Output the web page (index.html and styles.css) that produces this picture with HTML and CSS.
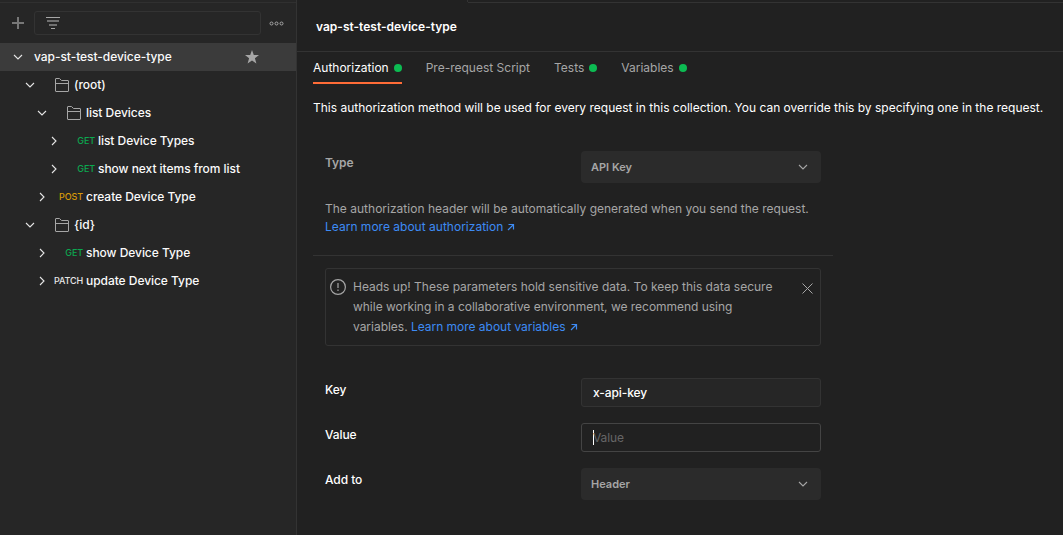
FILE: index.html
```html
<!DOCTYPE html>
<html lang="en">
<head>
<meta charset="utf-8">
<title>vap-st-test-device-type</title>
<link rel="stylesheet" href="styles.css">
</head>
<body>
<svg class="defs" width="0" height="0">
  <symbol id="down" viewBox="0 0 12 12"><path d="M2 4l4 4 4-4"/></symbol>
  <symbol id="right" viewBox="0 0 12 12"><path d="M4 2l4 4-4 4"/></symbol>
  <symbol id="folder" viewBox="0 0 14 14"><path d="M.5 13V1q0-.5.5-.5h3.500L6.500 2.500H13q.5 0 .5.5V13q0 .5-.5.5H1q-.5 0-.5-.5zM.5 5.500h13"/></symbol>
  <symbol id="arrow" viewBox="0 0 8 8"><path d="M1 7l5.500-5.500M1.500 1.500h5v5"/></symbol>
</svg>
<div class="app">
  <aside class="sidebar">
    <div class="toolbar">
      <svg class="plus" width="12" height="12"><path d="M6 0v12M0 6h12"/></svg>
      <div class="filter"><svg width="14" height="12"><path class="bright" d="M0 .5h14"/><path class="bar" d="M1 4h12M3 8h8"/><path class="bright" d="M5 11.500h4"/></svg></div>
      <svg class="more" width="15" height="5"><circle cx="2.500" cy="2.500" r="1.500"/><circle cx="7.500" cy="2.500" r="1.500"/><circle cx="12.500" cy="2.500" r="1.500"/></svg>
    </div>
    <div class="row active"><svg class="chev"><use href="#down"/></svg><span class="name root">vap-st-test-device-type</span>
      <svg class="star" width="14" height="14"><path d="M7 0l1.800 4.900 5.200.2-4.100 3.200 1.500 5.200L7 10.600l-4.400 2.900 1.500-5.200L0 5.100l5.200-.2z"/></svg></div>
    <div class="row l1"><svg class="chev"><use href="#down"/></svg><span class="kind"><svg class="folder"><use href="#folder"/></svg></span><span class="name">(root)</span></div>
    <div class="row l2"><svg class="chev"><use href="#down"/></svg><span class="kind"><svg class="folder"><use href="#folder"/></svg></span><span class="name">list Devices</span></div>
    <div class="row l3"><svg class="chev"><use href="#right"/></svg><span class="kind get">GET</span><span class="name">list Device Types</span></div>
    <div class="row l3"><svg class="chev"><use href="#right"/></svg><span class="kind get">GET</span><span class="name">show next items from list</span></div>
    <div class="row l2"><svg class="chev"><use href="#right"/></svg><span class="kind post">POST</span><span class="name">create Device Type</span></div>
    <div class="row l1"><svg class="chev"><use href="#down"/></svg><span class="kind"><svg class="folder"><use href="#folder"/></svg></span><span class="name">{id}</span></div>
    <div class="row l2"><svg class="chev"><use href="#right"/></svg><span class="kind get">GET</span><span class="name">show Device Type</span></div>
    <div class="row l2"><svg class="chev"><use href="#right"/></svg><span class="kind patch">PATCH</span><span class="name">update Device Type</span></div>
  </aside>
  <main class="main">
    <div class="strip"><div class="strip-tab"></div><div class="strip-rest"></div></div>
    <header class="title">vap-st-test-device-type</header>
    <nav class="tabs">
      <div class="tab current"><span>Authorization</span><i class="dot"></i></div>
      <div class="tab"><span>Pre-request Script</span></div>
      <div class="tab"><span>Tests</span><i class="dot"></i></div>
      <div class="tab"><span>Variables</span><i class="dot"></i></div>
    </nav>
    <p class="intro">This authorization method will be used for every request in this collection. You can override this by specifying one in the request.</p>
    <section class="type">
      <div class="field"><span class="label muted">Type</span><div class="select"><span>API Key</span><svg class="chev"><use href="#down"/></svg></div></div>
      <p class="help">The authorization header will be automatically generated when you send the request.<br><a>Learn more about authorization<svg class="arrow"><use href="#arrow"/></svg></a></p>
    </section>
    <section class="params">
      <div class="notice">
        <svg class="alert" width="16" height="16"><circle cx="8" cy="8" r="7.400"/><path d="M8 4v5M8 10.400v1.600"/></svg>
        <p class="notice-text">Heads up! These parameters hold sensitive data. To keep this data secure<br><span class="tight">while working in a collaborative environment, we recommend using</span><br><span class="tight">variables. <a>Learn more about variables<svg class="arrow"><use href="#arrow"/></svg></a></span></p>
        <svg class="close" width="11" height="11"><path d="M.5 .5l10 10M10.500 .5l-10 10"/></svg>
      </div>
      <div class="field"><span class="label">Key</span><div class="input filled">x-api-key</div></div>
      <div class="field"><span class="label">Value</span><div class="input focused"><i class="caret"></i><span class="placeholder">Value</span></div></div>
      <div class="field"><span class="label">Add to</span><div class="select"><span>Header</span><svg class="chev"><use href="#down"/></svg></div></div>
    </section>
  </main>
</div>
</body>
</html>
```
FILE: styles.css
```css
* { box-sizing: border-box; }
body { margin: 0; background: #212121; color: #fff; font: 12px/18px Inter, "Liberation Sans", sans-serif; overflow: hidden; }
p { margin: 0; }
svg { display: block; flex: none; fill: none; stroke: #a6a6a6; }
.defs { position: absolute; }
.app { display: flex; height: 535px; }

.sidebar { width: 297px; flex: none; background: #262626; border-right: 1px solid #333; padding-top: 2px; }
.toolbar { height: 41px; border-top: 1px solid #303030; display: flex; align-items: center; padding-left: 12px; }
.plus { stroke: #777; stroke-width: 2; }
.filter { width: 227px; height: 24px; margin: 0 8px 0 10px; border: 1px solid #333; border-radius: 3px; padding: 5px 0 0 11px; }
.filter .bar { stroke: #707070; stroke-width: 2; }
.filter .bright { stroke: #a6a6a6; }
.row { height: 28px; display: flex; align-items: center; padding-left: 12px; font-weight: 500; color: #fafafa; letter-spacing: -0.045px; }
.row.l1 { padding-left: 24px; }
.row.l2 { padding-left: 36px; }
.row.l3 { padding-left: 48px; }
.row.active { background: #3b3b3b; }
.chev { width: 12px; height: 12px; stroke: #e6e6e6; stroke-width: 1.100; }
.root { margin-left: 10px; }
.name { white-space: nowrap; }
.star { margin-left: auto; margin-right: 37px; fill: #a6a6a6; stroke: none; }
.kind { width: 35px; margin-right: 3px; display: flex; justify-content: flex-end; font-size: 9px; font-weight: 500; letter-spacing: -0.1px; }
.folder { width: 14px; height: 14px; margin-right: 2px; }
.get { color: #0ca750; }
.post { color: #d69a08; }
.patch { color: #e6e6e6; }

.main { flex: 1; min-width: 0; }
.strip { height: 3px; display: flex; }
.strip-tab { width: 171px; height: 2px; border-right: 1px solid #333; }
.strip-rest { flex: 1; border-bottom: 1px solid #333; }
.title { height: 49px; padding: 15px 0 0 19px; font-weight: 600; border-bottom: 1px solid #333; }
.tabs { display: flex; gap: 24px; padding-left: 16px; height: 32px; color: #a6a6a6; }
.tab { display: flex; gap: 5px; padding-top: 7px; white-space: nowrap; }
.tab.current { color: #fff; border-bottom: 2px solid #ff6c37; }
.dot { width: 8px; height: 8px; border-radius: 50%; background: #0cbb52; margin-top: 5px; }
.intro { padding: 15px 0 0 16px; white-space: nowrap; }
.type { width: 520px; margin: 34px 0 0 16px; padding: 0 12px 19px; border-bottom: 1px solid #333; }
.field { display: flex; justify-content: space-between; }
.label { padding-top: 3px; font-weight: 500; letter-spacing: -0.08px; }
.label.muted { color: #a6a6a6; font-weight: 600; }
.select { width: 240px; height: 32px; display: flex; align-items: center; justify-content: space-between; padding: 0 12px 0 10px; border-radius: 4px; background: #2b2b2b; color: #a6a6a6; font-size: 11px; font-weight: 600; }
.select .chev { stroke: #a6a6a6; }
.help { margin-top: 17px; color: #a6a6a6; white-space: nowrap; letter-spacing: 0.01px; }
a { color: #3d8bf4; }
.arrow { display: inline-block; width: 8px; height: 8px; margin-left: 4px; stroke: #3d8bf4; stroke-width: 1.200; }
.params { width: 496px; margin: 12px 0 0 28px; display: flex; flex-direction: column; gap: 16px; }
.notice { height: 78px; margin-bottom: 16px; border: 1px solid #333; border-radius: 3px; display: flex; padding: 8px 7px 0 4px; line-height: 20px; color: #a6a6a6; }
.alert { margin: 2px 7px 0 0; stroke-width: 1.200; }
.notice-text { white-space: nowrap; }
.tight { letter-spacing: -0.025px; }
.close { margin: 6px 0 0 auto; }
.input { width: 240px; height: 29px; display: flex; align-items: center; padding-left: 11px; border: 1px solid #333; border-radius: 3px; font-weight: 500; letter-spacing: -0.1px; }
.filled { background: #262626; }
.focused { border-color: #444; font-weight: 400; }
.caret { width: 1px; height: 15px; margin-right: -1px; background: #fff; }
.placeholder { color: #666; }
```
